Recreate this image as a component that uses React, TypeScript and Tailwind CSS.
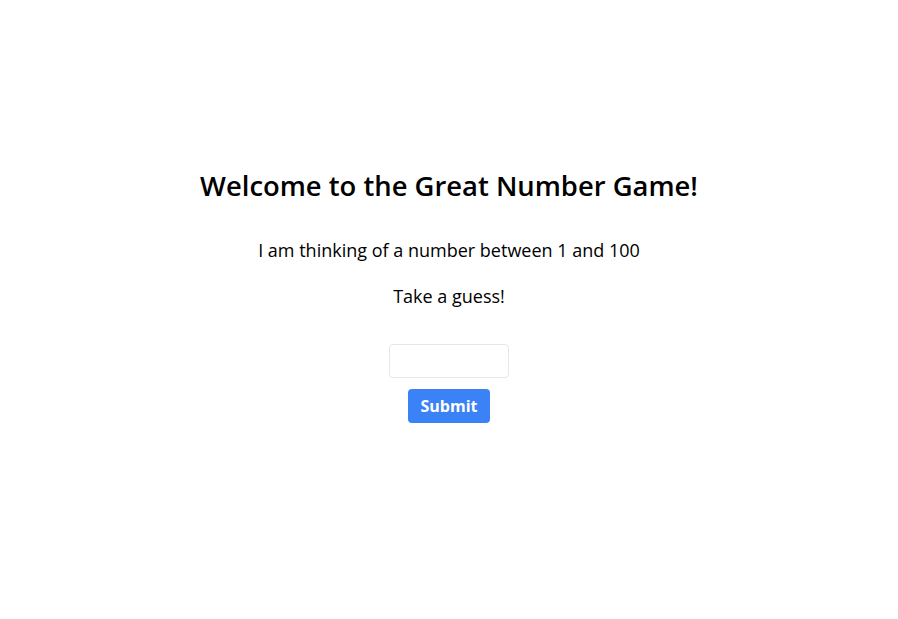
export default function App() {
  return (
    <div className="min-h-screen bg-white font-['Open_Sans',sans-serif] text-black">
      <div className="flex flex-col items-center pt-[168px]">
        <h1 className="text-[27.4px] font-semibold leading-9">Welcome to the Great Number Game!</h1>
        <p className="mt-8 text-lg leading-7">I am thinking of a number between 1 and 100</p>
        <p className="mt-[18px] text-lg leading-7">Take a guess!</p>
        <form className="mt-[34px] flex flex-col items-center" onSubmit={(e) => e.preventDefault()}>
          <input
            type="text"
            className="h-[34px] w-[120px] rounded border border-[#e5e7eb] px-2 outline-none"
          />
          <button
            type="submit"
            className="mt-[11px] h-[34px] w-[82px] rounded bg-[#3b82f6] text-base font-bold text-white"
          >
            Submit
          </button>
        </form>
      </div>
    </div>
  );
}
